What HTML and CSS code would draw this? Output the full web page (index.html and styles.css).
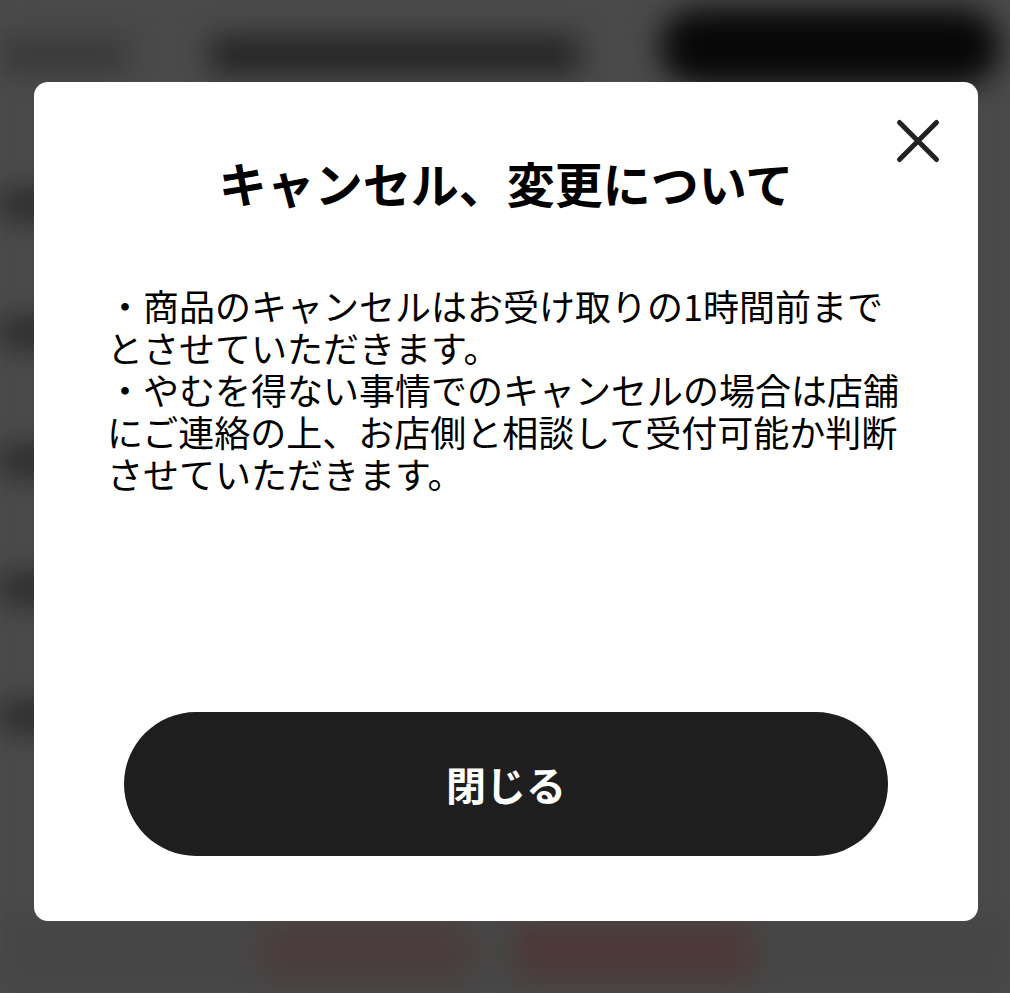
FILE: index.html
```html
<!DOCTYPE html>
<html lang="ja">
<head>
<meta charset="utf-8">
<title>キャンセル、変更について</title>
<link rel="stylesheet" href="styles.css">
</head>
<body>
<div class="page">
  <header class="page-header">
    <div class="hdr-back"></div>
    <div class="hdr-title"></div>
    <div class="hdr-action"></div>
  </header>
  <main class="list">
    <div class="row"><span class="row-text"></span></div>
    <div class="row"><span class="row-text"></span></div>
    <div class="row"><span class="row-text"></span></div>
    <div class="row"><span class="row-text"></span></div>
    <div class="row"><span class="row-text"></span></div>
  </main>
  <footer class="page-footer">
    <div class="foot-btn foot-btn-a"></div>
    <div class="foot-btn foot-btn-b"></div>
  </footer>
</div>

<div class="overlay">
  <section class="modal" role="dialog" aria-labelledby="modal-title">
    <button class="close" aria-label="閉じる">
      <svg viewBox="0 0 48 48" width="48" height="48">
        <path d="M5.5 5.5 L42.5 42.5 M42.5 5.5 L5.5 42.5" stroke="#222" stroke-width="5" stroke-linecap="round" fill="none"/>
      </svg>
    </button>
    <h1 id="modal-title" class="modal-title">キャンセル、変更について</h1>
    <div class="modal-body">
      <p>・商品のキャンセルはお受け取りの1時間前までとさせていただきます。</p>
      <p>・やむを得ない事情でのキャンセルの場合は店舗にご連絡の上、お店側と相談して受付可能か判断させていただきます。</p>
    </div>
    <button class="primary">閉じる</button>
  </section>
</div>
</body>
</html>
```

FILE: styles.css
```css
html, body {
  margin: 0;
  padding: 0;
  width: 1010px;
  height: 993px;
  overflow: hidden;
  background: #4a4a4a;
  font-family: "Noto Sans CJK JP", "Noto Sans", sans-serif;
}

/* blurred page behind the dialog */
.page {
  width: 1010px;
  height: 993px;
  display: flex;
  flex-direction: column;
  filter: blur(15px);
  background: #4a4a4a;
}

.page-header {
  height: 100px;
  display: flex;
  align-items: center;
  padding: 0 10px 0 0;
  box-sizing: border-box;
}
.hdr-back {
  width: 130px;
  height: 34px;
  background: #383838;
  border-radius: 6px;
  margin-top: 10px;
}
.hdr-title {
  width: 370px;
  height: 36px;
  margin-left: 80px;
  margin-top: 10px;
  background: #222222;
  border-radius: 6px;
}
.hdr-action {
  width: 340px;
  height: 76px;
  margin-left: auto;
  margin-top: -6px;
  background: #080808;
  border-radius: 38px;
}

.list {
  padding-top: 41px;
  display: flex;
  flex-direction: column;
}
.row {
  height: 128px;
  display: flex;
  align-items: center;
}
.row-text {
  width: 110px;
  height: 24px;
  background: #222222;
  border-radius: 4px;
}

.page-footer {
  margin-top: auto;
  height: 80px;
  display: flex;
  align-items: flex-start;
  padding: 10px 0 0 262px;
  gap: 44px;
  box-sizing: border-box;
  background: #464646;
}
.foot-btn {
  height: 56px;
  border-radius: 8px;
}
.foot-btn-a {
  width: 208px;
  background: #4b3c3c;
}
.foot-btn-b {
  width: 240px;
  background: #4d3838;
}

/* dialog */
.overlay {
  position: fixed;
  inset: 0;
  display: flex;
  justify-content: center;
  align-items: flex-start;
  padding-top: 82px;
  box-sizing: border-box;
}
.modal {
  position: relative;
  width: 944px;
  height: 839px;
  margin-left: 2px;
  background: #ffffff;
  border-radius: 14px;
  box-sizing: border-box;
  padding: 70px 0 65px;
  display: flex;
  flex-direction: column;
}
.close {
  position: absolute;
  top: 35px;
  right: 36px;
  width: 48px;
  height: 48px;
  padding: 0;
  border: 0;
  background: transparent;
  display: flex;
}
.modal-title {
  margin: 0;
  font-size: 48px;
  line-height: 60px;
  font-weight: 700;
  color: #000;
  text-align: center;
}
.modal-body {
  margin-top: 72px;
  padding: 0 72px 0 73px;
  font-size: 36px;
  line-height: 42px;
  color: #000;
}
.modal-body p {
  margin: 0;
}
.primary {
  margin: auto 90px 0;
  height: 144px;
  border: 0;
  border-radius: 72px;
  background: #1e1e1e;
  color: #fff;
  font-family: "Noto Sans CJK JP", "Noto Sans", sans-serif;
  font-size: 40px;
  font-weight: 700;
}
```
